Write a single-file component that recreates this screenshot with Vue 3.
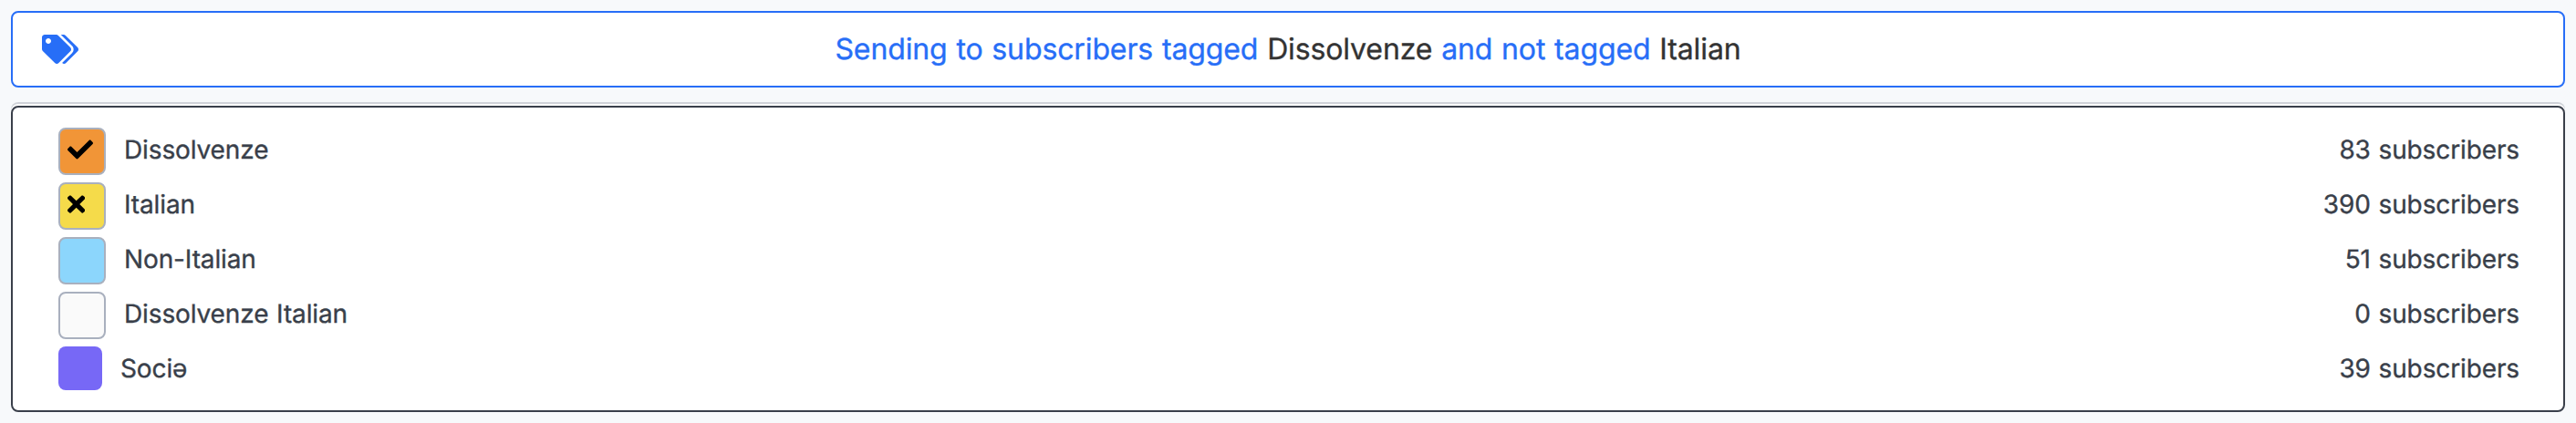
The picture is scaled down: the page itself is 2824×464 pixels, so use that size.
<script setup>
const tags = [
  { name: 'Dissolvenze', count: 83, color: '#f19537', state: 'included' },
  { name: 'Italian', count: 390, color: '#f5db4a', state: 'excluded' },
  { name: 'Non-Italian', count: 51, color: '#8cd6fc' },
  { name: 'Dissolvenze Italian', count: 0, color: '#fafafa' },
  { name: 'Sociə', count: 39, color: '#7768f6', plain: true },
]
</script>

<template>
  <main class="page">
    <header class="summary">
      <svg class="tags-icon" viewBox="0 0 640 512" aria-hidden="true">
        <path d="M497.941 225.941L286.059 14.059A48 48 0 0 0 252.118 0H48C21.49 0 0 21.49 0 48v204.118a48 48 0 0 0 14.059 33.941l211.882 211.882c18.744 18.745 49.136 18.746 67.882 0l204.118-204.118c18.745-18.745 18.745-49.137 0-67.882zM112 160c-26.51 0-48-21.49-48-48s21.49-48 48-48 48 21.49 48 48-21.49 48-48 48zm513.941 133.823L421.823 497.941c-18.745 18.745-49.137 18.745-67.882 0l-.36-.36L527.64 323.522c16.999-16.999 26.36-39.6 26.36-63.64s-9.362-46.641-26.36-63.64L331.397 0h48.721a48 48 0 0 1 33.941 14.059l211.882 211.882c18.745 18.745 18.745 49.137 0 67.882z" />
      </svg>
      <p class="sentence">Sending to subscribers tagged <b>Dissolvenze</b> and not tagged <b>Italian</b></p>
    </header>

    <section class="shell">
      <ul class="list">
        <li v-for="tag in tags" :key="tag.name" class="row">
          <span class="swatch" :class="{ plain: tag.plain }" :style="{ backgroundColor: tag.color }">
            <svg v-if="tag.state === 'included'" class="check" viewBox="0 0 512 512" aria-hidden="true">
              <path d="M173.898 439.404l-166.4-166.4c-9.997-9.997-9.997-26.206 0-36.204l36.203-36.204c9.997-9.998 26.207-9.998 36.204 0L192 312.69 432.095 72.596c9.997-9.997 26.207-9.997 36.204 0l36.203 36.204c9.997 9.997 9.997 26.206 0 36.204l-294.4 294.401c-9.998 9.997-26.207 9.997-36.204-.001z" />
            </svg>
            <svg v-else-if="tag.state === 'excluded'" class="times" viewBox="0 0 352 512" aria-hidden="true">
              <path d="M242.72 256l100.07-100.07c12.28-12.28 12.28-32.19 0-44.48l-22.24-22.24c-12.28-12.28-32.19-12.28-44.48 0L176 189.28 75.93 89.21c-12.28-12.28-32.19-12.28-44.48 0L9.21 111.45c-12.28 12.28-12.28 32.19 0 44.48L109.28 256 9.21 356.07c-12.28 12.28-12.28 32.19 0 44.48l22.24 22.24c12.28 12.28 32.2 12.28 44.48 0L176 322.72l100.07 100.07c12.28 12.28 32.2 12.28 44.48 0l22.24-22.24c12.28-12.28 12.28-32.19 0-44.48L242.72 256z" />
            </svg>
          </span>
          <span class="name">{{ tag.name }}</span>
          <span class="count">{{ tag.count }} subscribers</span>
        </li>
      </ul>
    </section>
  </main>
</template>

<style>
body {
  background: #f7f9fb;
}
</style>

<style scoped>
.page {
  box-sizing: border-box;
  height: 464px;
  padding: 12px;
  background: #f7f9fb;
  font-family: Inter, "Liberation Sans", sans-serif;
  font-optical-sizing: none;
  text-rendering: geometricPrecision;
  letter-spacing: -0.12px;
  word-spacing: 0.95px;
  -webkit-text-stroke: 0.35px currentColor;
}
.summary {
  box-sizing: border-box;
  display: grid;
  grid-template-columns: 40px 1fr 40px;
  align-items: center;
  height: 84px;
  padding: 0 32px;
  border: 2px solid #276ef7;
  border-radius: 8px;
  background: #fff;
  color: #276ef7;
}
.tags-icon {
  width: 40px;
  height: 32px;
  fill: currentColor;
}
.sentence {
  margin: 0;
  font-size: 32px;
  line-height: 48px;
  text-align: center;
  white-space: nowrap;
}
.sentence b {
  font-weight: 400;
  color: #333;
  -webkit-text-stroke-color: #333;
}
.shell {
  box-sizing: border-box;
  height: 340px;
  margin-top: 16px;
  padding-top: 4px;
  border-radius: 8px;
  background: #fff;
  box-shadow: inset 0 2px #cfd2d8;
}
.list {
  box-sizing: border-box;
  height: 336px;
  margin: 0;
  padding: 22px 48px 0 50px;
  border: 2px solid #393f4a;
  border-radius: 8px;
  background: #fff;
  list-style: none;
}
.row {
  display: flex;
  align-items: flex-start;
  height: 60px;
  font-size: 28px;
  line-height: 48px;
  color: #393f4a;
}
.swatch {
  box-sizing: border-box;
  display: flex;
  align-items: flex-start;
  width: 52px;
  height: 52px;
  margin-right: 20px;
  padding: 8px;
  border: 2px solid #a9b0be;
  border-radius: 8px;
}
.swatch.plain {
  width: 48px;
  height: 48px;
  border: 0;
}
.check {
  width: 28px;
  height: 28px;
}
.times {
  width: 19.25px;
  height: 28px;
}
.count {
  margin-left: auto;
}
</style>
